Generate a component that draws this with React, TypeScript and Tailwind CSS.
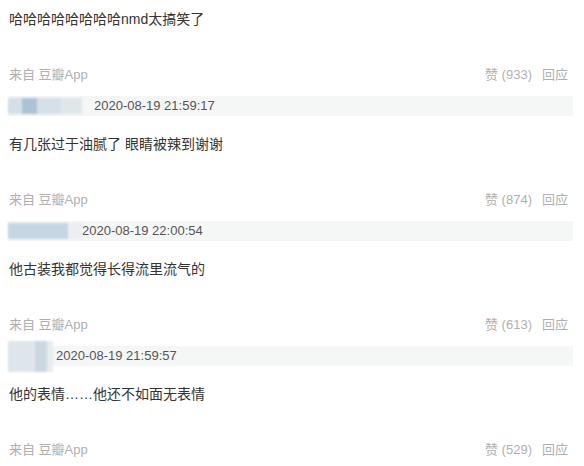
import React from "react";

type C = { text: string; likes: number; date: string; blob: "a" | "b" | "c" };

const comments: C[] = [
  { text: "哈哈哈哈哈哈哈哈nmd太搞笑了", likes: 933, date: "2020-08-19 21:59:17", blob: "a" },
  { text: "有几张过于油腻了 眼睛被辣到谢谢", likes: 874, date: "2020-08-19 22:00:54", blob: "b" },
  { text: "他古装我都觉得长得流里流气的", likes: 613, date: "2020-08-19 21:59:57", blob: "c" },
  { text: "他的表情……他还不如面无表情", likes: 529, date: "", blob: "a" },
];

function Blob({ kind }: { kind: "a" | "b" | "c" }) {
  if (kind === "a") {
    return (
      <div className="flex h-[16px] w-[86px] shrink-0 blur-[1px]">
        <div className="w-[14px] bg-[#d3e0e8]" />
        <div className="w-[15px] bg-[#aac4d6]" />
        <div className="w-[24px] bg-[#d4e1e8]" />
        <div className="w-[21px] bg-[#dfe7eb]" />
        <div className="w-[12px] bg-[#f5f6f6]" />
      </div>
    );
  }
  if (kind === "b") {
    return (
      <div className="flex h-[16px] w-[74px] shrink-0 blur-[1px]">
        <div className="w-[60px] bg-[#c5d7e3]" />
        <div className="w-[14px] bg-[#eaeff1]" />
      </div>
    );
  }
  return (
    <div className="flex h-[31px] w-[48px] shrink-0 blur-[1px]">
      <div className="w-[27px] bg-[#dfe6eb]" />
      <div className="w-[12px] bg-[#cbd8e1]" />
      <div className="w-[6px] bg-[#e6ecef]" />
    </div>
  );
}

export default function App() {
  return (
    <div
      className="w-[584px] h-[466px] overflow-hidden bg-white pt-[7px]"
      style={{ fontFamily: '"Liberation Sans", "Noto Sans CJK SC", sans-serif' }}
    >
      {comments.map((c, i) => (
        <div key={i} className={i === 0 ? "" : "mt-[16px]"}>
          <div className="h-[24px] pl-[9px] text-[14px] leading-[24px] text-[#333]">{c.text}</div>
          <div className="mt-[34px] flex h-[20px] items-center justify-between pl-[9px] pr-[16px] text-[13px] leading-[20px] text-[#b0b0b0]">
            <span>来自 豆瓣App</span>
            <span className="flex gap-[10px]">
              <span>赞 ({c.likes})</span>
              <span>回应</span>
            </span>
          </div>
          {c.date && (
            <div className="mt-[11px] ml-[8px] mr-[11px] flex h-[20px] items-center bg-[#f5f6f6]">
              <Blob kind={c.blob} />
              <span className="ml-[0px] text-[13px] leading-[20px] text-[#555]">
                {c.date}
              </span>
            </div>
          )}
        </div>
      ))}
    </div>
  );
}
